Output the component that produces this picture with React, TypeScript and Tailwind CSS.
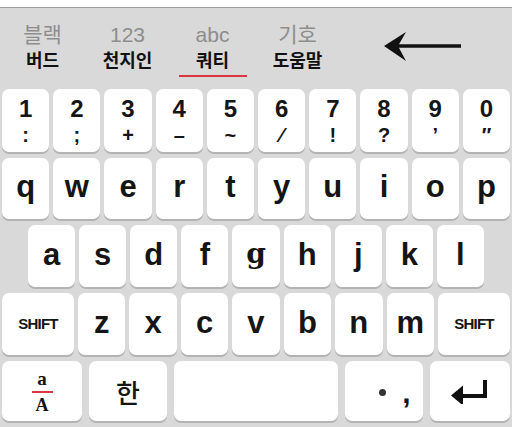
import React from "react";

const SANS = "font-['Liberation_Sans','Noto_Sans_CJK_KR',sans-serif]";

const TABS = [
  { top: "블랙", bottom: "버드" },
  { top: "123", bottom: "천지인" },
  { top: "abc", bottom: "쿼티", active: true },
  { top: "기호", bottom: "도움말" },
];

const NUMBERS = [
  ["1", ":"],
  ["2", ";"],
  ["3", "+"],
  ["4", "–"],
  ["5", "~"],
  ["6", "⁄"],
  ["7", "!"],
  ["8", "?"],
  ["9", "’"],
  ["0", "″"],
];

function Key({ children, className = "" }: { children?: React.ReactNode; className?: string }) {
  return (
    <div
      className={`bg-white rounded-[7px] shadow-[0_2px_0_#b3b3b3] flex items-center justify-center text-[#151515] ${className}`}
    >
      {children}
    </div>
  );
}

function Letter({ ch }: { ch: string }) {
  // the reference draws "g" with a two-storey serif glyph
  const font = ch === "g" ? "font-['DejaVu_Serif',serif] text-[28px]" : "text-[31px]";
  return (
    <Key className="flex-1 h-full">
      <span className={`${font} font-bold leading-none -mt-[4px]`}>{ch}</span>
    </Key>
  );
}

export default function App() {
  return (
    <div className={`w-[512px] h-[427px] bg-[#d9d9d9] overflow-hidden ${SANS}`}>
      <div className="h-[7px] bg-white" />
      <div className="h-px bg-[#9c9c9c]" />

      {/* Header tabs */}
      <div className="h-[81px] flex items-start">
        {TABS.map((t) => (
          <div key={t.top} className="w-[85px] flex flex-col items-center pt-[15px]">
            <span className="text-[21px] leading-[24px] text-[#8d8d8d]">{t.top}</span>
            <span className="text-[18px] leading-[24px] font-bold text-[#111] mt-[2px]">{t.bottom}</span>
            {t.active && <div className="w-[68px] h-[2px] bg-[#d9363e] mt-[2px]" />}
          </div>
        ))}
        <svg width="82" height="34" viewBox="0 0 82 34" className="ml-[43px] mt-[21px]">
          <line x1="12" y1="17" x2="78" y2="17" stroke="#111" strokeWidth="3.5" />
          <path d="M1 17 L23 3 L15 17 L23 32 Z" fill="#111" />
        </svg>
      </div>

      {/* Keys */}
      <div className="flex flex-col gap-[6px] px-[2px]">
        <div className="flex gap-[4px] h-[63px]">
          {NUMBERS.map(([n, s]) => (
            <Key key={n} className="flex-1 h-full flex-col">
              <span className="text-[24px] font-semibold leading-none">{n}</span>
              <span className="text-[20px] font-bold leading-none mt-[4px] h-[20px]">{s}</span>
            </Key>
          ))}
        </div>

        <div className="flex gap-[4px] h-[61px]">
          {"qwertyuiop".split("").map((c) => (
            <Letter key={c} ch={c} />
          ))}
        </div>

        <div className="flex gap-[4px] h-[62px] px-[26px]">
          {"asdfghjkl".split("").map((c) => (
            <Letter key={c} ch={c} />
          ))}
        </div>

        <div className="flex gap-[4px] h-[62px]">
          <Key className="w-[72px] h-full">
            <span className="text-[15px] font-bold tracking-[-0.8px]">SHIFT</span>
          </Key>
          {"zxcvbnm".split("").map((c) => (
            <Letter key={c} ch={c} />
          ))}
          <Key className="w-[72px] h-full">
            <span className="text-[15px] font-bold tracking-[-0.8px]">SHIFT</span>
          </Key>
        </div>

        <div className="flex gap-[7px] h-[60px]">
          <Key className="w-[80px] h-full flex-col">
            <span className="font-['Liberation_Serif',serif] font-bold text-[19px] leading-none">a</span>
            <div className="w-[21px] h-[2px] bg-[#d9363e] my-[3px]" />
            <span className="font-['Liberation_Serif',serif] font-bold text-[18px] leading-none">A</span>
          </Key>
          <Key className="w-[78px] h-full">
            <span className="text-[26px] font-medium font-['Noto_Sans_CJK_KR',sans-serif]">한</span>
          </Key>
          <Key className="flex-1 h-full" />
          <Key className="w-[78px] h-full gap-[16px] pl-[22px]">
            <span className="w-[7px] h-[7px] rounded-full bg-[#333] mt-[2px]" />
            <span className="text-[30px] font-bold leading-none mt-[4px]">,</span>
          </Key>
          <Key className="w-[80px] h-full">
            <svg width="40" height="26" viewBox="0 0 40 26">
              <path d="M35 2 V18 H10" fill="none" stroke="#111" strokeWidth="4" />
              <path d="M1 18 L13 8 L13 28 Z" fill="#111" transform="translate(0 -0.5)" />
            </svg>
          </Key>
        </div>
      </div>
    </div>
  );
}
